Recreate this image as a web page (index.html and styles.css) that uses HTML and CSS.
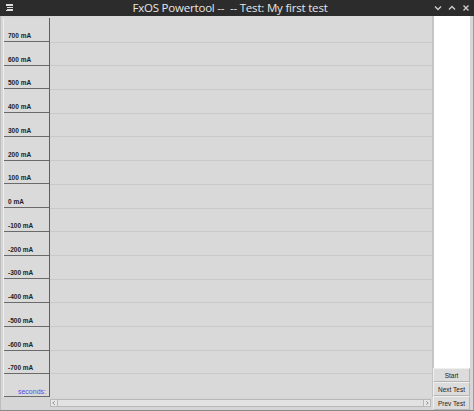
FILE: index.html
```html
<!DOCTYPE html>
<html>
<head>
<meta charset="utf-8">
<link rel="stylesheet" href="styles.css">
</head>
<body>
<div class="window">
  <div class="titlebar">
    <svg class="menu-icon" width="8" height="8" viewBox="0 0 8 8"><rect x="0" y="0" width="7" height="2" fill="#ddd"/><rect x="1" y="3" width="6" height="1" fill="#ddd"/><rect x="1" y="5" width="6" height="1" fill="#ddd"/><rect x="0" y="6" width="7" height="1" fill="#ddd"/></svg>
    <div class="title">FxOS Powertool --  -- Test: My first test</div>
    <div class="controls">
      <svg width="8" height="8" viewBox="0 0 8 8"><path d="M1 2.5 L4 5.5 L7 2.5" stroke="#ccc" stroke-width="1.4" fill="none"/></svg>
      <svg width="8" height="8" viewBox="0 0 8 8"><path d="M1 5.5 L4 2.5 L7 5.5" stroke="#ccc" stroke-width="1.4" fill="none"/></svg>
      <svg width="8" height="8" viewBox="0 0 8 8"><path d="M1.5 1.5 L6.5 6.5 M6.5 1.5 L1.5 6.5" stroke="#ccc" stroke-width="1.4" fill="none"/></svg>
    </div>
  </div>
  <div class="body">
    <div class="left">
      <div class="axis">
        <div class="cell"><span>700 mA</span></div>
        <div class="cell"><span>600 mA</span></div>
        <div class="cell"><span>500 mA</span></div>
        <div class="cell"><span>400 mA</span></div>
        <div class="cell"><span>300 mA</span></div>
        <div class="cell"><span>200 mA</span></div>
        <div class="cell"><span>100 mA</span></div>
        <div class="cell"><span>0 mA</span></div>
        <div class="cell"><span>-100 mA</span></div>
        <div class="cell"><span>-200 mA</span></div>
        <div class="cell"><span>-300 mA</span></div>
        <div class="cell"><span>-400 mA</span></div>
        <div class="cell"><span>-500 mA</span></div>
        <div class="cell"><span>-600 mA</span></div>
        <div class="cell"><span>-700 mA</span></div>
        <div class="cell seconds"><span>seconds:</span></div>
      </div>
    </div>
    <div class="center">
      <div class="plot">
        <div class="row"></div><div class="row"></div><div class="row"></div><div class="row"></div>
        <div class="row"></div><div class="row"></div><div class="row"></div><div class="row"></div>
        <div class="row"></div><div class="row"></div><div class="row"></div><div class="row"></div>
        <div class="row"></div><div class="row"></div><div class="row"></div><div class="row last"></div>
      </div>
      <div class="scrollbar">
        <div class="arrow left-arrow">
          <svg width="7" height="7" viewBox="0 0 7 7"><path d="M4.5 1.5 L2 3.5 L4.5 5.5" stroke="#888" stroke-width="1" fill="none"/></svg>
        </div>
        <div class="track"></div>
        <div class="arrow right-arrow">
          <svg width="7" height="7" viewBox="0 0 7 7"><path d="M2.5 1.5 L5 3.5 L2.5 5.5" stroke="#888" stroke-width="1" fill="none"/></svg>
        </div>
      </div>
    </div>
    <div class="right">
      <div class="list"></div>
      <div class="btn">Start</div>
      <div class="btn">Next Test</div>
      <div class="btn">Prev Test</div>
    </div>
  </div>
</div>
</body>
</html>
```
FILE: styles.css
```css
* { box-sizing: border-box; }
html, body { margin: 0; padding: 0; }
body {
  width: 474px;
  height: 411px;
  overflow: hidden;
  background: #d8d8d8;
  font-family: "Liberation Sans", sans-serif;
}
.window {
  width: 474px;
  height: 411px;
  display: flex;
  flex-direction: column;
  background: #d6d6d6;
  border-bottom: 1px solid #888;
}
.titlebar {
  height: 16px;
  flex: none;
  background: #2c2c2c;
  display: flex;
  align-items: center;
  padding: 0 4px 0 6px;
}
.menu-icon { flex: none; }
.title {
  flex: 1;
  text-align: center;
  color: #e6e6e6;
  font-family: "Open Sans", "Noto Sans", sans-serif;
  font-size: 11.5px;
  letter-spacing: -0.2px;
  line-height: 16px;
  padding-left: 12px;
  white-space: pre;
}
.controls {
  display: flex;
  gap: 6px;
  align-items: center;
}
.body {
  flex: 1;
  display: flex;
  min-height: 0;
}
.left {
  width: 50px;
  flex: none;
  display: flex;
  flex-direction: column;
  padding-left: 2px;
  padding-top: 2px;
  border-left: 1px solid #bdbdbd;
}
.axis {
  height: 379px;
  display: flex;
  flex-direction: column;
  border-right: 1px solid #5e5e5e;
  border-left: 1px solid #efefef;
  background: #dadada;
}
.cell {
  flex: 1;
  border-bottom: 1px solid #6a6a6a;
  display: flex;
  align-items: flex-end;
  padding: 0 0 1px 4px;
  font-size: 6.5px;
  color: #222;
  font-weight: bold;
}
.cell span { line-height: 8px; }
.seconds {
  justify-content: flex-end;
  padding-right: 3px;
  padding-bottom: 0;
  color: #4f4fe6;
  font-weight: normal;
  font-size: 7px;
}
.center {
  flex: 1;
  display: flex;
  flex-direction: column;
  min-width: 0;
}
.plot {
  height: 381px;
  padding-top: 3px;
  display: flex;
  flex-direction: column;
  background: #d9d9d9;
  border-right: 1px solid #c4c4c4;
}
.row {
  flex: 1;
  border-bottom: 1px solid #c9c9c9;
}
.row.last { border-bottom: none; }
.scrollbar {
  margin-top: 2px;
  height: 8px;
  display: flex;
  border: 1px solid #b8b8b8;
  background: #dedede;
  margin-right: 2px;
}
.arrow {
  width: 7px;
  flex: none;
  display: flex;
  align-items: center;
  justify-content: center;
  background: #e8e8e8;
}
.left-arrow { border-right: 1px solid #b8b8b8; }
.right-arrow { border-left: 1px solid #b8b8b8; }
.arrow svg { display: block; width: 6px; height: 6px; }
.track { flex: 1; background: #e2e2e2; }
.right {
  width: 41px;
  flex: none;
  display: flex;
  flex-direction: column;
  padding-right: 3px;
  border-right: 1px solid #9a9a9a;
}
.list {
  flex: 1;
  background: #ffffff;
  border-left: 1px solid #c8c8c8;
}
.btn {
  height: 14px;
  flex: none;
  display: flex;
  align-items: center;
  justify-content: center;
  background: #dcdcdc;
  border: 1px solid #b5b5b5;
  border-top-color: #efefef;
  border-left-color: #efefef;
  font-size: 6.5px;
  color: #222;
}
```
